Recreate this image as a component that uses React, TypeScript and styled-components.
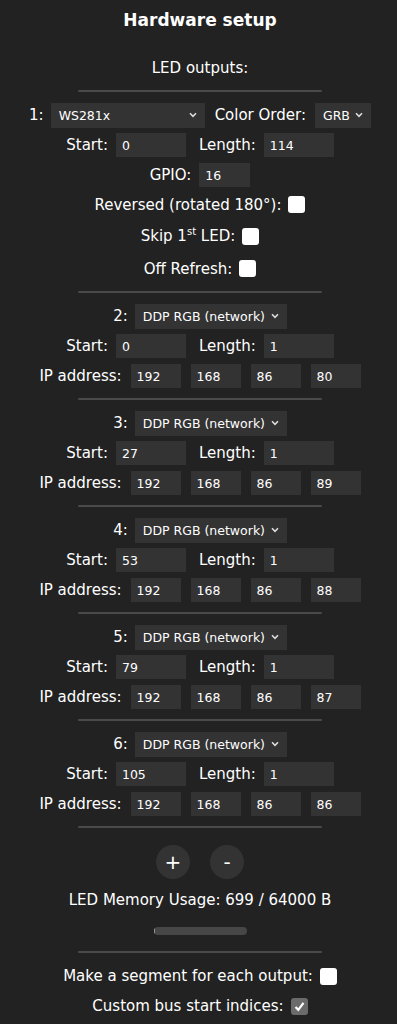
import React, { FC } from "react";
import styled, { createGlobalStyle } from "styled-components";

const GlobalStyle = createGlobalStyle`
  body {
    margin: 0;
    background: #222;
    color: #fff;
    font-family: "DejaVu Sans", Verdana, sans-serif;
    font-size: 15px;
  }
`;

const Page = styled.div`
  text-align: center;
  padding-left: 3px;
`;

const Title = styled.h2`
  margin: 0;
  font-size: 17px;
  line-height: 40px;
  font-weight: bold;
`;

const Heading = styled.div`
  margin-top: 13px;
  line-height: 30px;
`;

const Rule = styled.hr`
  width: 244px;
  height: 2px;
  margin: 7px auto 8px;
  border: 0;
  border-radius: 1px;
  background: #4a4a4a;
`;

const Row = styled.div<{ $h?: number }>`
  display: flex;
  justify-content: center;
  align-items: center;
  height: ${(p) => p.$h ?? 30}px;
  white-space: nowrap;
`;

const Label = styled.span<{ $before?: number; $after?: number }>`
  margin-left: ${(p) => p.$before ?? 0}px;
  margin-right: ${(p) => p.$after ?? 8}px;
`;

const Input = styled.input<{ $w: number }>`
  width: ${(p) => p.$w}px;
  height: 24px;
  box-sizing: border-box;
  margin: 0;
  padding: 0 6px;
  border: 0;
  outline: none;
  background: #333;
  color: #fff;
  font-family: "DejaVu Sans", Verdana, sans-serif;
  font-size: 12.5px;
`;

const IpGroup = styled.div`
  display: flex;
  gap: 10px;
`;

const Select = styled.div<{ $w: number }>`
  width: ${(p) => p.$w}px;
  height: 25px;
  box-sizing: border-box;
  display: flex;
  align-items: center;
  justify-content: space-between;
  padding: 0 8px;
  background: #333;
  font-size: 12.5px;
`;

const Box = styled.span<{ $checked?: boolean }>`
  display: inline-flex;
  align-items: center;
  justify-content: center;
  width: 17px;
  height: 17px;
  border-radius: 3px;
  background: ${(p) => (p.$checked ? "#6b6b6b" : "#fff")};
`;

const Sup = styled.sup`
  font-size: 10px;
  line-height: 0;
`;

const Buttons = styled.div`
  display: flex;
  justify-content: center;
  gap: 20px;
  margin-top: 17px;
`;

const RoundButton = styled.button`
  width: 34px;
  height: 34px;
  padding: 0;
  border: 0;
  border-radius: 50%;
  background: #333;
  color: #fff;
  font-family: "DejaVu Sans", Verdana, sans-serif;
  font-size: 20px;
  line-height: 34px;
`;

const Memory = styled.div`
  margin-top: 6px;
  line-height: 30px;
`;

const Track = styled.div`
  width: 93px;
  height: 8px;
  margin: 12px auto 0;
  border-radius: 4px;
  background: #474747;
  overflow: hidden;
`;

const Fill = styled.div`
  height: 100%;
  background: #999;
`;

const Chevron: FC = () => (
  <svg width="8" height="6" viewBox="0 0 8 6">
    <path d="M1 1.3 L4 4.3 L7 1.3" fill="none" stroke="#ddd" strokeWidth="1.6" />
  </svg>
);

const Check: FC<{ checked?: boolean }> = ({ checked }) => (
  <Box $checked={checked}>
    {checked && (
      <svg width="13" height="13" viewBox="0 0 13 13">
        <path d="M2.5 7 L5.3 9.8 L10.5 2.8" fill="none" stroke="#fff" strokeWidth="2.2" />
      </svg>
    )}
  </Box>
);

const outputs = [
  { n: 2, start: 0, ip: 80 },
  { n: 3, start: 27, ip: 89 },
  { n: 4, start: 53, ip: 88 },
  { n: 5, start: 79, ip: 87 },
  { n: 6, start: 105, ip: 86 },
];

const StartRow: FC<{ start: number; length: number }> = ({ start, length }) => (
  <Row>
    <Label>Start:</Label>
    <Input $w={70} defaultValue={start} />
    <Label $before={13}>Length:</Label>
    <Input $w={70} defaultValue={length} />
  </Row>
);

const App: FC = () => {
  const used = 699;
  const total = 64000;

  return (
    <Page>
      <GlobalStyle />
      <Title>Hardware setup</Title>
      <Heading>LED outputs:</Heading>
      <Rule />

      <Row>
        <Label $after={7}>1:</Label>
        <Select $w={154}>
          <span>WS281x</span>
          <Chevron />
        </Select>
        <Label $before={10} $after={9}>Color Order:</Label>
        <Select $w={56}>
          <span>GRB</span>
          <Chevron />
        </Select>
      </Row>
      <StartRow start={0} length={114} />
      <Row>
        <Label>GPIO:</Label>
        <Input $w={51} defaultValue={16} />
      </Row>
      <Row $h={29}>
        <Label $after={7}>Reversed (rotated 180°):</Label>
        <Check />
      </Row>
      <Row $h={34}>
        <Label $after={7}>
          Skip 1<Sup>st</Sup> LED:
        </Label>
        <Check />
      </Row>
      <Row $h={31}>
        <Label $after={7}>Off Refresh:</Label>
        <Check />
      </Row>
      <Rule />

      {outputs.map((o) => (
        <React.Fragment key={o.n}>
          <Row>
            <Label $after={7}>{o.n}:</Label>
            <Select $w={152}>
              <span>DDP RGB (network)</span>
              <Chevron />
            </Select>
          </Row>
          <StartRow start={o.start} length={1} />
          <Row>
            <Label $after={9}>IP address:</Label>
            <IpGroup>
              <Input $w={50} defaultValue={192} />
              <Input $w={50} defaultValue={168} />
              <Input $w={50} defaultValue={86} />
              <Input $w={50} defaultValue={o.ip} />
            </IpGroup>
          </Row>
          <Rule />
        </React.Fragment>
      ))}

      <Buttons>
        <RoundButton>+</RoundButton>
        <RoundButton>-</RoundButton>
      </Buttons>
      <Memory>
        LED Memory Usage: {used} / {total} B
      </Memory>
      <Track>
        <Fill style={{ width: `${Math.max(2, (used / total) * 100)}%` }} />
      </Track>
      <Rule style={{ marginTop: 16 }} />
      <Row>
        <Label $after={7}>Make a segment for each output:</Label>
        <Check />
      </Row>
      <Row>
        <Label $after={7}>Custom bus start indices:</Label>
        <Check checked />
      </Row>
    </Page>
  );
};

export default App;
